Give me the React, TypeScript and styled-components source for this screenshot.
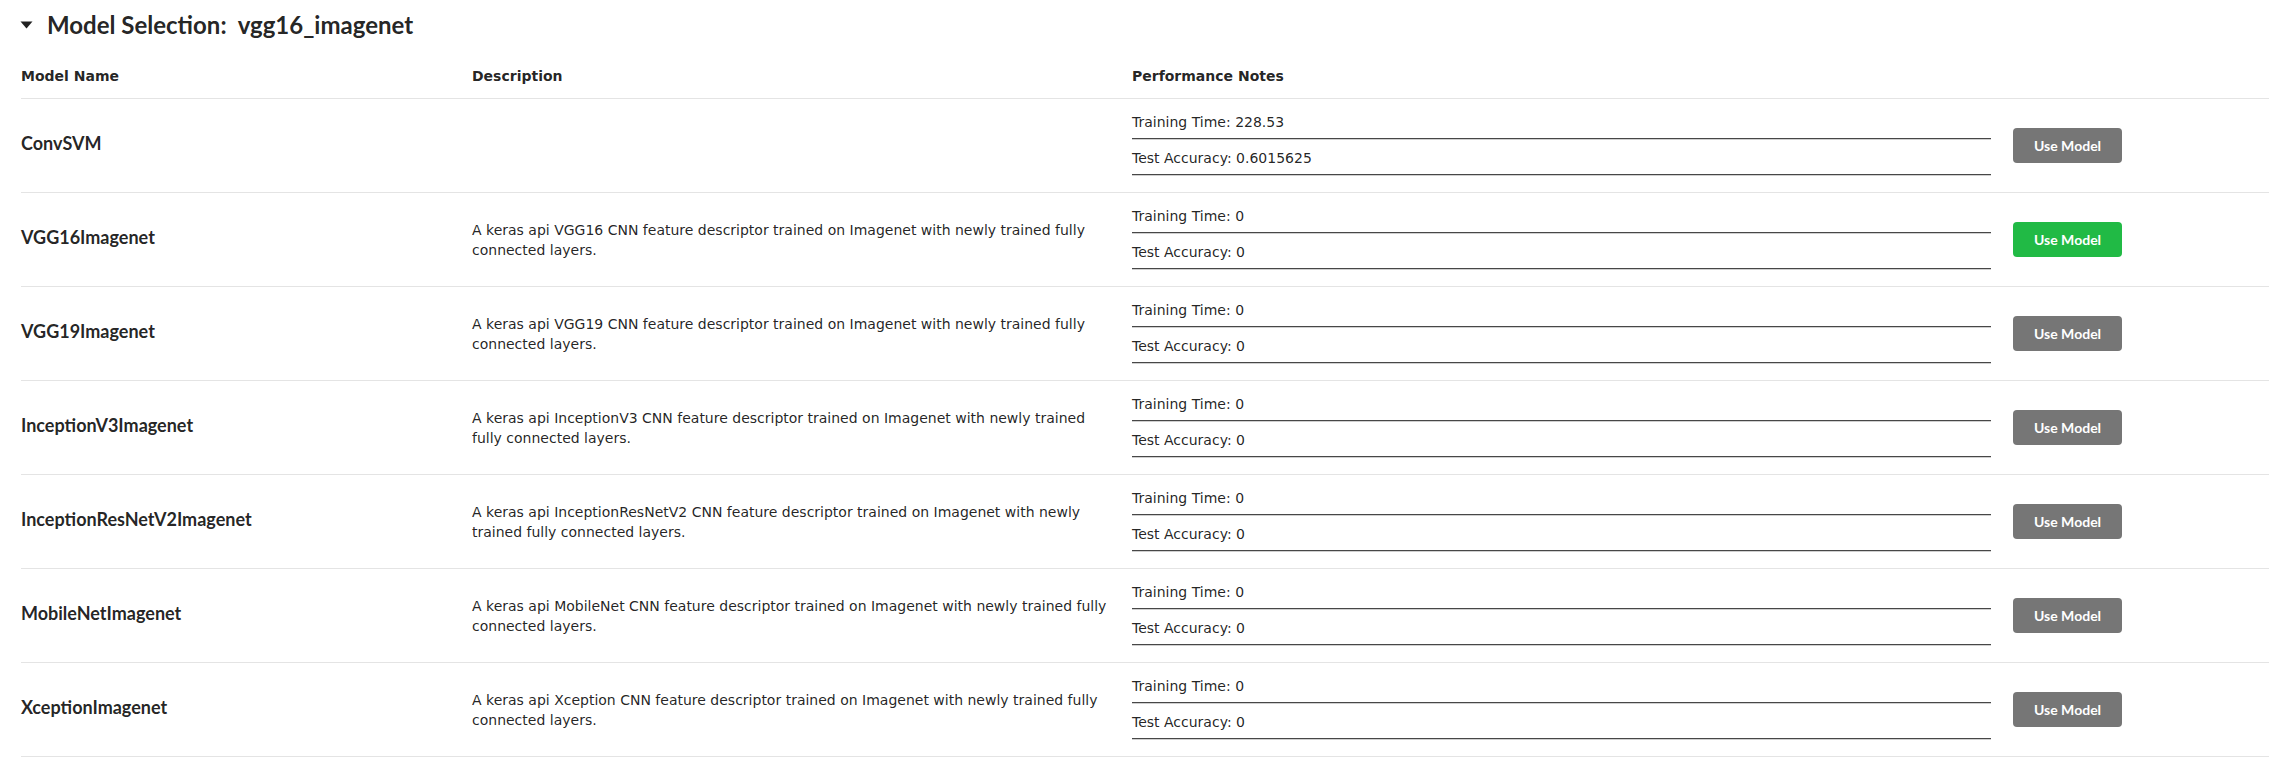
import React from "react";
import styled, { createGlobalStyle } from "styled-components";

const GlobalStyle = createGlobalStyle`
  html, body { margin: 0; padding: 0; background: #ffffff; }
  body { font-family: "DejaVu Sans", sans-serif; color: rgba(0,0,0,0.87); }
`;

const Page = styled.div`
  padding: 10px 0 0 21px;
`;

const Title = styled.h2`
  display: flex;
  align-items: center;
  margin: 0;
  font-family: Lato, "Liberation Sans", sans-serif;
  font-weight: 700;
  font-size: 24px;
  line-height: 29px;
  color: rgba(0,0,0,0.87);
  white-space: pre;
`;

const Caret = styled.svg`
  width: 13px;
  height: 8px;
  margin: 0 14px 0 -1px;
  flex: none;
`;

const Table = styled.div`
  margin-top: 18px;
`;

const Row = styled.div<{ $head?: boolean }>`
  display: grid;
  grid-template-columns: 440px 660px 881px 1fr;
  align-items: center;
  border-bottom: 1px solid #e4e4e4;
  min-height: ${(p) => (p.$head ? "40px" : "94px")};
  box-sizing: border-box;
`;

const HeadCell = styled.div<{ $first?: boolean }>`
  padding: 9px 11px 12px ${(p) => (p.$first ? "0" : "11px")};
  font-family: "DejaVu Sans", sans-serif;
  font-weight: 700;
  font-size: 14px;
  line-height: 20px;
  color: rgba(0,0,0,0.87);
`;

const NameCell = styled.div`
  padding: 0 11px 5px 0;
  font-family: Lato, "Liberation Sans", sans-serif;
  font-weight: 700;
  font-size: 18px;
  line-height: 22px;
  color: rgba(0,0,0,0.87);
`;

const DescCell = styled.div`
  padding: 0 8px 0 11px;
  font-size: 14px;
  line-height: 20px;
  color: rgba(0,0,0,0.87);
`;

const NotesCell = styled.div`
  padding: 0 11px 4px;
  font-size: 14px;
  line-height: 20px;
  color: rgba(0,0,0,0.87);
`;

const Note = styled.div`
  & + & { margin-top: 8px; }
`;

const NoteRule = styled.div`
  margin-top: 6px;
  height: 0;
  border-top: 1px solid #474747;
  border-bottom: 1px solid #cfcfcf;
`;

const ActionCell = styled.div`
  padding: 0 11px;
`;

const UseButton = styled.button<{ $active?: boolean }>`
  font-family: Lato, "Liberation Sans", sans-serif;
  font-weight: 700;
  font-size: 14px;
  line-height: 14px;
  padding: 11px 21px 10px;
  border: none;
  border-radius: 4px;
  color: #ffffff;
  background: ${(p) => (p.$active ? "#21ba45" : "#767676")};
  cursor: pointer;
`;

type Model = {
  name: string;
  desc: string;
  time: string;
  acc: string;
  active?: boolean;
};

const d = (n: string) =>
  `A keras api ${n} CNN feature descriptor trained on Imagenet with newly trained fully connected layers.`;

const models: Model[] = [
  { name: "ConvSVM", desc: "", time: "228.53", acc: "0.6015625" },
  { name: "VGG16Imagenet", desc: d("VGG16"), time: "0", acc: "0", active: true },
  { name: "VGG19Imagenet", desc: d("VGG19"), time: "0", acc: "0" },
  { name: "InceptionV3Imagenet", desc: d("InceptionV3"), time: "0", acc: "0" },
  { name: "InceptionResNetV2Imagenet", desc: d("InceptionResNetV2"), time: "0", acc: "0" },
  { name: "MobileNetImagenet", desc: d("MobileNet"), time: "0", acc: "0" },
  { name: "XceptionImagenet", desc: d("Xception"), time: "0", acc: "0" },
];

export default function App() {
  return (
    <>
      <GlobalStyle />
      <Page>
        <Title>
          <Caret viewBox="0 0 13 8">
            <path d="M0.5 0.5 L12.5 0.5 L6.5 7.5 Z" fill="#222" />
          </Caret>
          {"Model Selection:  vgg16_imagenet"}
        </Title>
        <Table>
          <Row $head>
            <HeadCell $first>Model Name</HeadCell>
            <HeadCell>Description</HeadCell>
            <HeadCell>Performance Notes</HeadCell>
            <HeadCell />
          </Row>
          {models.map((m) => (
            <Row key={m.name}>
              <NameCell>{m.name}</NameCell>
              <DescCell>{m.desc}</DescCell>
              <NotesCell>
                <Note>
                  <div>Training Time: {m.time}</div>
                  <NoteRule />
                </Note>
                <Note>
                  <div>Test Accuracy: {m.acc}</div>
                  <NoteRule />
                </Note>
              </NotesCell>
              <ActionCell>
                <UseButton $active={m.active}>Use Model</UseButton>
              </ActionCell>
            </Row>
          ))}
        </Table>
      </Page>
    </>
  );
}
